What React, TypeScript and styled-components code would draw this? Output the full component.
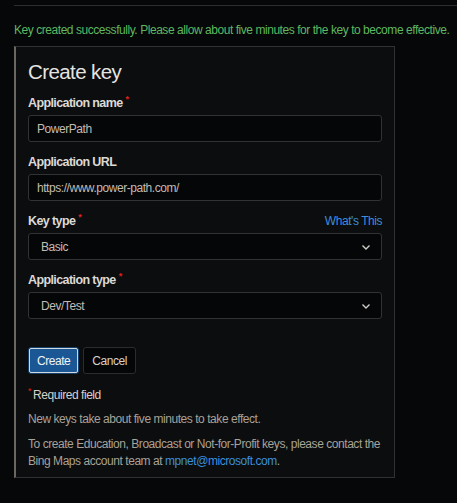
import React from "react";
import styled, { createGlobalStyle } from "styled-components";

const GlobalStyle = createGlobalStyle`
  html, body {
    margin: 0;
    padding: 0;
    background: #050709;
  }
  body {
    font-family: "Liberation Sans", Arial, sans-serif;
  }
`;

const Page = styled.div`
  width: 457px;
  height: 503px;
  box-sizing: border-box;
  padding: 5px 0 0 14px;
  background: #050709;
  overflow: hidden;
`;

const TopRule = styled.div`
  height: 1px;
  background: #2b2d2f;
`;

const SuccessMessage = styled.p`
  margin: 17px 0 0;
  font-size: 12px;
  letter-spacing: -0.45px;
  line-height: 14px;
  color: #5fb760;
  white-space: nowrap;
`;

const Panel = styled.section`
  margin-top: 9px;
  width: 381px;
  box-sizing: border-box;
  padding: 12px 12px 7px 12px;
  background: #0b0d0f;
  border: 1px solid #2f3133;
  border-left: 2px solid #6a6660;
`;

const Heading = styled.h2`
  margin: 0 0 10px;
  font-size: 20.5px;
  font-weight: 400;
  letter-spacing: -0.6px;
  line-height: 26px;
  color: #e6e4e0;
`;

const Field = styled.div`
  margin-bottom: 12px;
`;

const LabelRow = styled.div`
  display: flex;
  justify-content: space-between;
  align-items: baseline;
  height: 16px;
  margin-bottom: 4px;
`;

const Label = styled.label`
  font-size: 12.5px;
  font-weight: 700;
  letter-spacing: -0.6px;
  line-height: 16px;
  color: #dcdad6;
`;

const Asterisk = styled.span`
  position: relative;
  top: -5px;
  margin-left: 3px;
  font-size: 9px;
  line-height: 0;
  color: #e0201c;
`;

const TextLink = styled.a`
  font-size: 12px;
  letter-spacing: -0.45px;
  line-height: 16px;
  color: #3c8ede;
  text-decoration: none;
`;

const Input = styled.input`
  display: block;
  width: 100%;
  height: 27px;
  box-sizing: border-box;
  padding: 0 8px;
  background: #050608;
  border: 1px solid #303234;
  border-radius: 3px;
  color: #c2bcb4;
  font-family: inherit;
  font-size: 12px;
  letter-spacing: -0.45px;
  outline: none;
`;

const SelectBox = styled.div`
  display: flex;
  align-items: center;
  height: 27px;
  box-sizing: border-box;
  padding: 0 10px 0 12px;
  background: #050608;
  border: 1px solid #303234;
  border-radius: 3px;
  color: #c2bcb4;
  font-size: 12px;
  letter-spacing: -0.45px;
`;

const SelectValue = styled.span`
  flex: 1;
`;

const Buttons = styled.div`
  display: flex;
  gap: 4px;
  margin-top: 28px;
`;

const Button = styled.button<{ $primary?: boolean }>`
  height: 27px;
  box-sizing: border-box;
  padding: 0 8px;
  border-radius: 3px;
  font-family: inherit;
  font-size: 12px;
  letter-spacing: -0.45px;
  cursor: pointer;
  background: ${(p) => (p.$primary ? "#1a5794" : "#050608")};
  color: ${(p) => (p.$primary ? "#f2f4f6" : "#d6d2cc")};
  border: ${(p) => (p.$primary ? "1px solid #163f6a" : "1px solid #2a2c2e")};
  outline: ${(p) => (p.$primary ? "1px solid #d0d8e0" : "none")};
  outline-offset: -2px;
`;

const Required = styled.p`
  margin: 13px 0 0;
  font-size: 12px;
  letter-spacing: -0.45px;
  line-height: 16px;
  color: #d6d2cc;
`;

const Note = styled.p`
  margin: 8px 0 0;
  font-size: 12px;
  letter-spacing: -0.45px;
  line-height: 17px;
  color: #a8a298;
`;

const Chevron = () => (
  <svg width="10" height="10" viewBox="0 0 10 10" aria-hidden="true">
    <path d="M1.5 3.5 L5 7 L8.5 3.5" fill="none" stroke="#d0ccc6" strokeWidth="1.4" />
  </svg>
);

const Star = () => <Asterisk>*</Asterisk>;

export default function App() {
  return (
    <Page>
      <GlobalStyle />
      <TopRule />
      <SuccessMessage>
        Key created successfully. Please allow about five minutes for the key to become effective.
      </SuccessMessage>
      <Panel>
        <Heading>Create key</Heading>
        <Field>
          <LabelRow>
            <Label>
              Application name
              <Star />
            </Label>
          </LabelRow>
          <Input defaultValue="PowerPath" />
        </Field>
        <Field>
          <LabelRow>
            <Label>Application URL</Label>
          </LabelRow>
          <Input defaultValue="https://www.power-path.com/" />
        </Field>
        <Field>
          <LabelRow>
            <Label>
              Key type
              <Star />
            </Label>
            <TextLink href="#">What's This</TextLink>
          </LabelRow>
          <SelectBox>
            <SelectValue>Basic</SelectValue>
            <Chevron />
          </SelectBox>
        </Field>
        <Field>
          <LabelRow>
            <Label>
              Application type
              <Star />
            </Label>
          </LabelRow>
          <SelectBox>
            <SelectValue>Dev/Test</SelectValue>
            <Chevron />
          </SelectBox>
        </Field>
        <Buttons>
          <Button $primary>Create</Button>
          <Button>Cancel</Button>
        </Buttons>
        <Required>
          <Asterisk style={{ marginLeft: 0, marginRight: 2 }}>*</Asterisk>Required field
        </Required>
        <Note>New keys take about five minutes to take effect.</Note>
        <Note>
          To create Education, Broadcast or Not-for-Profit keys, please contact the Bing Maps account team at{" "}
          <TextLink href="#">mpnet@microsoft.com</TextLink>.
        </Note>
      </Panel>
    </Page>
  );
}
